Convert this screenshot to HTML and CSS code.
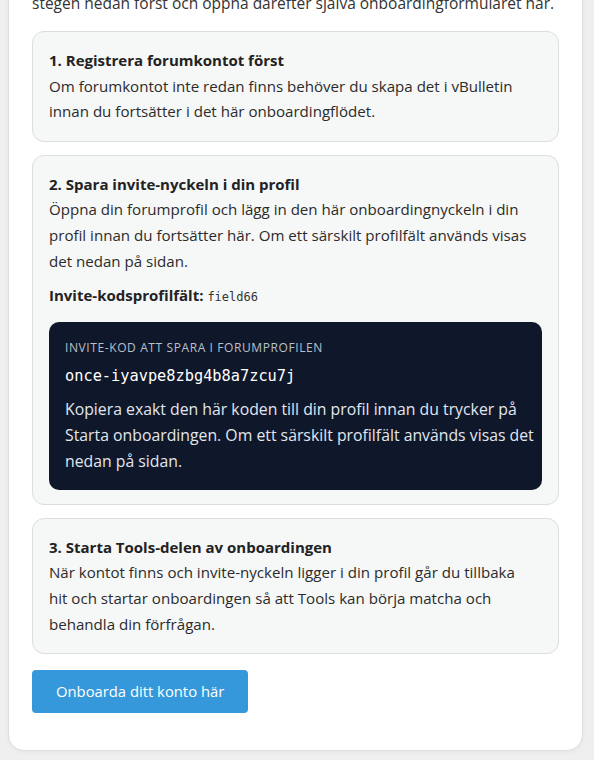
FILE: index.html
```html
<!DOCTYPE html>
<html lang="sv">
<head>
<meta charset="utf-8">
<title>Onboarding</title>
<link rel="stylesheet" href="styles.css">
</head>
<body>
<main class="card">
  <p class="intro">Innan du börjar behöver forumkontot vara klart. Gå igenom<br>stegen nedan först och öppna därefter själva onboardingformuläret här.</p>

  <section class="step">
    <h3 class="step-title">1. Registrera forumkontot först</h3>
    <p class="step-text">Om forumkontot inte redan finns behöver du skapa det i vBulletin innan du fortsätter i det här onboardingflödet.</p>
  </section>

  <section class="step step-with-code">
    <h3 class="step-title">2. Spara invite-nyckeln i din profil</h3>
    <p class="step-text">Öppna din forumprofil och lägg in den här onboardingnyckeln i din profil innan du fortsätter här. Om ett särskilt profilfält används visas det nedan på sidan.</p>
    <p class="field-line"><strong>Invite-kodsprofilfält:</strong> <code class="field-code">field66</code></p>
    <div class="code-box">
      <div class="code-label">Invite-kod att spara i forumprofilen</div>
      <div class="code-value">once-iyavpe8zbg4b8a7zcu7j</div>
      <p class="code-text">Kopiera exakt den här koden till din profil innan du trycker på Starta onboardingen. Om ett särskilt profilfält används visas det nedan på sidan.</p>
    </div>
  </section>

  <section class="step">
    <h3 class="step-title">3. Starta Tools-delen av onboardingen</h3>
    <p class="step-text step-text-narrow">När kontot finns och invite-nyckeln ligger i din profil går du tillbaka hit och startar onboardingen så att Tools kan börja matcha och behandla din förfrågan.</p>
  </section>

  <a class="button" href="#">Onboarda ditt konto här</a>
</main>
</body>
</html>
```

FILE: styles.css
```css
* { box-sizing: border-box; }
html, body { margin: 0; padding: 0; }
body {
  background: #efefef;
  font-family: "Open Sans", "Noto Sans", sans-serif;
  font-size: 15.1px;
  line-height: 25.6px;
  color: #2b2b2b;
  padding: 0 11px 10px 8px;
}
.card {
  background: #ffffff;
  border: 1px solid #dedede;
  border-radius: 16px;
  box-shadow: 0 1px 4px rgba(0,0,0,0.05);
  margin-top: -61px;
  padding: 24px 23px 37px 23px;
  display: flex;
  flex-direction: column;
  align-items: flex-start;
}
.intro {
  margin: 0 0 15px 0;
  font-size: 15.5px;
  line-height: 26px;
  color: #333;
}
.step {
  align-self: stretch;
  background: #f6f7f7;
  border: 1px solid #dcdddd;
  border-radius: 12px;
  padding: 16px;
  margin-bottom: 13px;
}
.step-with-code { padding-bottom: 14px; }
.step:last-of-type { margin-bottom: 16px; }
.step-title {
  margin: 0;
  font-size: 15px;
  font-weight: 700;
  line-height: 25.6px;
  color: #222;
}
.step-text {
  margin: 0;
}
.step-text-narrow {
  max-width: 472px;
}
.field-line {
  margin: 9px 0 11px 0;
}
.field-line strong { font-size: 15px; font-weight: 700; color: #222; }
.field-code {
  font-family: "DejaVu Sans Mono", "Liberation Mono", monospace;
  font-size: 12px;
  color: #333;
}
.code-box {
  background: #0f172a;
  border-radius: 10px;
  padding: 16px 8px 16px 16px;
  color: #e5e7eb;
}
.code-label {
  font-size: 12px;
  line-height: 19px;
  letter-spacing: 0.05em;
  text-transform: uppercase;
  color: #b8c0cc;
  margin-bottom: 6px;
}
.code-value {
  font-family: "DejaVu Sans Mono", "Liberation Mono", monospace;
  font-size: 15.3px;
  line-height: 26px;
  color: #ffffff;
  margin-bottom: 7px;
}
.code-text {
  margin: 0;
  font-size: 15.8px;
  line-height: 26px;
  color: #e2e6ee;
}
.button {
  display: inline-block;
  background: #3498db;
  color: #ffffff;
  text-decoration: none;
  border-radius: 4px;
  padding: 9px 24px;
  font-size: 14.8px;
  line-height: 25px;
}
```
